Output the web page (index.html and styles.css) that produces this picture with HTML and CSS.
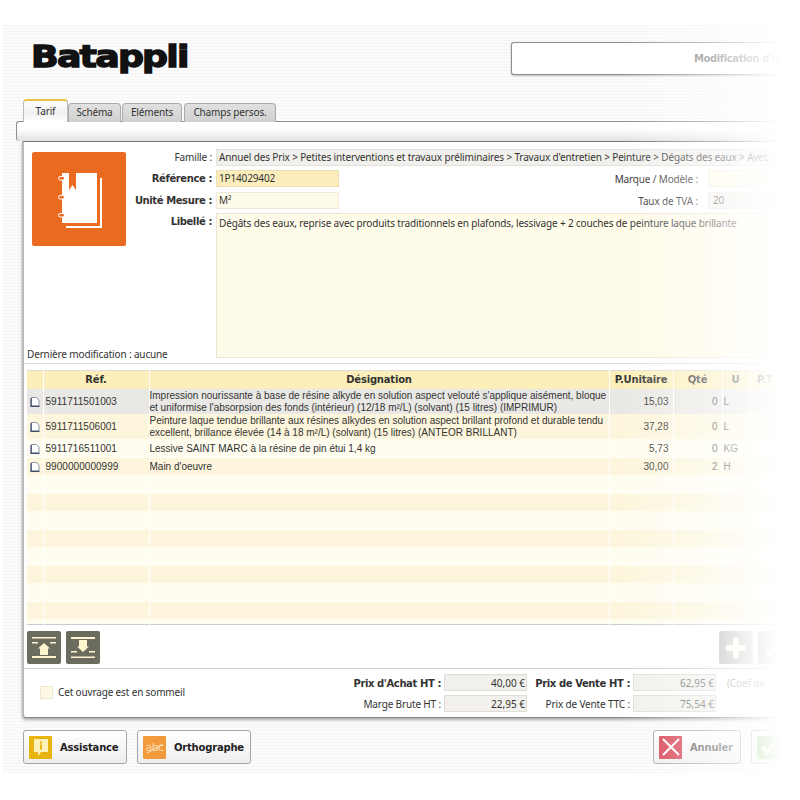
FILE: index.html
```html
<!DOCTYPE html>
<html lang="fr">
<head>
<meta charset="utf-8">
<title>Batappli</title>
<link rel="stylesheet" href="styles.css">
</head>
<body>
<div class="app">
  <header class="head">
    <div class="logo">Batappli</div>
    <div class="title"><span>Modification d'un</span></div>
  </header>
  <nav class="tabs">
    <div class="tab on">Tarif</div>
    <div class="tab t2">Schéma</div>
    <div class="tab t3">Eléments</div>
    <div class="tab t4">Champs persos.</div>
  </nav>
  <div class="tabbar"></div>
  <main class="panel">
    <section class="form">
      <div class="left">
        <div class="pic">
          <svg width="94" height="94" viewBox="0 0 94 94">
            <path d="M68 26h2v50H34v-2h34z" fill="#fff"/>
            <path d="M30 21h7v17l3.500-5 3.500 5V21h21v50H30z" fill="#fff"/>
            <g fill="#ea6b1f" stroke="#fff"><rect x="26.500" y="24.500" width="6" height="3.500" rx="1.700"/><rect x="26.500" y="43.500" width="6" height="3.500" rx="1.700"/><rect x="26.500" y="61.500" width="6" height="3.500" rx="1.700"/></g>
          </svg>
        </div>
        <div class="modif">Dernière modification : aucune</div>
      </div>
      <div class="fields">
        <div class="row r1"><label class="lab">Famille :</label><div class="inp fam">Annuel des Prix &gt; Petites interventions et travaux préliminaires &gt; Travaux d'entretien &gt; Peinture &gt; Dégats des eaux &gt; Avec</div></div>
        <div class="row r2"><label class="lab b">Référence :</label><div class="inp ref">1P14029402</div><label class="lab2">Marque / Modèle :</label><div class="inp side cream"></div></div>
        <div class="row r3"><label class="lab b">Unité Mesure :</label><div class="inp cream um">M²</div><label class="lab2">Taux de TVA :</label><div class="inp side grey">20</div></div>
        <div class="row r4"><label class="lab b">Libellé :</label><div class="inp cream area">Dégâts des eaux, reprise avec produits traditionnels en plafonds, lessivage + 2 couches de peinture laque brillante</div></div>
      </div>
    </section>
    <table class="grid">
      <colgroup><col class="c0"><col class="c1"><col class="c2"><col class="c3"><col class="c4"><col class="c5"><col class="c6"></colgroup>
      <thead><tr><th></th><th>Réf.</th><th>Désignation</th><th>P.Unitaire</th><th>Qté</th><th>U</th><th class="last">P.T</th></tr></thead>
      <tbody>
        <tr class="h25 sel"><td class="ic"><svg width="10" height="10" viewBox="0 0 10 10"><path d="M1.500.5h5L9 3v6H1.500z" fill="#fff" stroke="#8d97aa"/><path d="M1 1v8.300h8.500" fill="none" stroke="#3f4b66" stroke-width="1.200"/></svg></td><td class="rf">5911711501003</td><td class="de">Impression nourissante à base de résine alkyde en solution aspect velouté s'applique aisément, bloque<br>et uniformise l'absorpsion des fonds (intérieur) (12/18 m²/L) (solvant) (15 litres) (IMPRIMUR)</td><td class="n">15,03</td><td class="n">0</td><td class="u">L</td><td></td></tr>
        <tr class="h25 dk"><td class="ic"><svg width="10" height="10" viewBox="0 0 10 10"><path d="M1.500.5h5L9 3v6H1.500z" fill="#fff" stroke="#8d97aa"/><path d="M1 1v8.300h8.500" fill="none" stroke="#3f4b66" stroke-width="1.200"/></svg></td><td class="rf">5911711506001</td><td class="de">Peinture laque tendue brillante aux résines alkydes en solution aspect brillant profond et durable tendu<br>excellent, brillance élevée (14 à 18 m²/L) (solvant) (15 litres) (ANTEOR BRILLANT)</td><td class="n">37,28</td><td class="n">0</td><td class="u">L</td><td></td></tr>
        <tr class="h19"><td class="ic"><svg width="10" height="10" viewBox="0 0 10 10"><path d="M1.500.5h5L9 3v6H1.500z" fill="#fff" stroke="#8d97aa"/><path d="M1 1v8.300h8.500" fill="none" stroke="#3f4b66" stroke-width="1.200"/></svg></td><td class="rf">5911716511001</td><td class="de">Lessive SAINT MARC à la résine de pin étui 1,4 kg</td><td class="n">5,73</td><td class="n">0</td><td class="u">KG</td><td></td></tr>
        <tr class="h17 dk"><td class="ic"><svg width="10" height="10" viewBox="0 0 10 10"><path d="M1.500.5h5L9 3v6H1.500z" fill="#fff" stroke="#8d97aa"/><path d="M1 1v8.300h8.500" fill="none" stroke="#3f4b66" stroke-width="1.200"/></svg></td><td class="rf">9900000000999</td><td class="de">Main d'oeuvre</td><td class="n">30,00</td><td class="n">2</td><td class="u">H</td><td></td></tr>
        <tr class="h19"><td></td><td></td><td></td><td></td><td></td><td></td><td></td></tr>
        <tr class="h17 dk"><td></td><td></td><td></td><td></td><td></td><td></td><td></td></tr>
        <tr class="h19"><td></td><td></td><td></td><td></td><td></td><td></td><td></td></tr>
        <tr class="h17 dk"><td></td><td></td><td></td><td></td><td></td><td></td><td></td></tr>
        <tr class="h19"><td></td><td></td><td></td><td></td><td></td><td></td><td></td></tr>
        <tr class="h17 dk"><td></td><td></td><td></td><td></td><td></td><td></td><td></td></tr>
        <tr class="h19"><td></td><td></td><td></td><td></td><td></td><td></td><td></td></tr>
        <tr class="h17 dk"><td></td><td></td><td></td><td></td><td></td><td></td><td></td></tr>
        <tr class="h6"><td></td><td></td><td></td><td></td><td></td><td></td><td></td></tr>
      </tbody>
    </table>
    <section class="tools">
      <button class="sq"><svg width="24" height="21" viewBox="0 0 24 21"><g fill="#fff6d0"><path d="M0 0h24v1.500H0zM0 5h6v1.500H0zM18 5h6v1.500h-6zM0 19h24v2H0z"/><path d="M12 6l-6 5.500h2V18h8v-6.500h2z"/></g></svg></button>
      <button class="sq"><svg width="24" height="21" viewBox="0 0 24 21"><g fill="#fff6d0"><path d="M0 0h24v2H0zM0 14h6v1.500H0zM18 14h6v1.500h-6zM0 19.500h24V21H0z"/><path d="M12 15l6-5.500h-2V3H8v6.500H6z"/></g></svg></button>
      <span class="fill"></span>
      <button class="sq lite"><svg width="20" height="20" viewBox="0 0 20 20"><path d="M7 0h6v7h7v6h-7v7H7v-7H0V7h7z" fill="#fffbe8"/></svg></button>
      <button class="sq lite"><svg width="22" height="22" viewBox="0 0 22 22"><path d="M3 15L15 3l4 4L7 19l-5 1z" fill="#fff"/></svg></button>
    </section>
    <section class="totals">
      <label class="sleep"><span class="box"></span>Cet ouvrage est en sommeil</label>
      <div class="sums">
        <label class="sl b">Prix d'Achat HT :</label><div class="val">40,00 €</div><label class="sl b">Prix de Vente HT :</label><div class="val soft">62,95 €</div><span class="coef">(Coef de</span>
        <label class="sl">Marge Brute HT :</label><div class="val">22,95 €</div><label class="sl">Prix de Vente TTC :</label><div class="val soft">75,54 €</div>
      </div>
    </section>
  </main>
  <footer class="foot">
    <button class="btn bassist"><span class="bic yellow"><svg width="16" height="19" viewBox="0 0 16 19"><path d="M1 1h14v13H8l-3 4v-4H1z" fill="#fff2b8"/><path d="M7 3.500h2v2H7zM7 6.500h2v5H7z" fill="#e8b410"/></svg></span>Assistance</button>
    <button class="btn bortho"><span class="bic orange"><span class="abc">abc</span></span>Orthographe</button>
    <span class="fill"></span>
    <button class="btn bcancel"><span class="bic red"><svg width="18" height="18" viewBox="0 0 18 18"><path d="M1 1l16 16M17 1L1 17" stroke="#fff" stroke-width="2"/></svg></span>Annuler</button>
    <button class="btn bok"><span class="bic green"><svg width="18" height="18" viewBox="0 0 18 18"><path d="M2 9l5 6L16 3" stroke="#fff" stroke-width="3" fill="none"/></svg></span></button>
  </footer>
</div>
<div class="fade"></div>
</body>
</html>
```
FILE: styles.css
```css
* { box-sizing: border-box; }
html, body { margin: 0; padding: 0; background: #fff; }
body { width: 800px; height: 800px; overflow: hidden; position: relative; font: 10px "Noto Sans", sans-serif; letter-spacing: -.15px; color: #333; }
.app { position: absolute; left: 3px; top: 25px; width: 797px; height: 748px; overflow: hidden; background: repeating-linear-gradient(#f5f5f5 0 1px, #fbfbfb 1px 3px); }
.head { height: 75px; display: flex; align-items: flex-start; }
.logo { flex: none; margin: 13px 0 0 28px; width: 160px; font: bold 31px/36px "DejaVu Sans", sans-serif; color: #111; letter-spacing: -1.5px; -webkit-text-stroke: 1.4px #111; transform: scaleX(1.17); transform-origin: left center; }
.title { flex: 1; margin: 17px 0 0 320px; height: 33px; background: #fff; border: 1px solid #8e8e8e; border-right: 0; border-radius: 3px 0 0 3px; box-shadow: 0 1px 2px #bbb; display: flex; align-items: center; padding-left: 182px; white-space: nowrap; font: bold 10px "DejaVu Sans", sans-serif; letter-spacing: -.4px; color: #777; }
.tabs { height: 22px; padding-left: 20px; display: flex; align-items: flex-end; position: relative; z-index: 1; margin-bottom: -1px; }
.tab { height: 19px; line-height: 17px; text-align: center; background: linear-gradient(#e0e0e0, #d0d0d0); border: 1px solid #aaa; border-bottom: 0; border-radius: 4px 4px 0 0; margin-right: 1px; width: 53px; }
.tab.on { height: 23px; width: 45px; line-height: 20px; background: linear-gradient(#fff, #f0f0f0 60%, #fff); border-top: 2px solid #e8c040; border-left-color: #bbb; border-right-color: #bbb; margin-right: 0; }
.t3 { width: 60px; } .t4 { width: 92px; margin-left: 1px; }
.tabbar { height: 20px; margin-left: 13px; background: linear-gradient(#fff 35%, #e2e2e2); border: 1px solid #8f8f8f; border-right: 0; border-bottom: 0; border-radius: 3px 0 0 3px; }
.panel { margin-left: 19px; height: 577px; background: #fff; border-left: 2px solid #b9b9b9; border-top: 1px solid #777; border-bottom: 1px solid #888; border-radius: 0 0 0 4px; box-shadow: 0 2px 3px #aaa; padding: 0 0 0 3px; }
.form { height: 222px; display: flex; border-bottom: 1px solid #ddd; margin-left: -3px; padding-left: 5px; }
.left { width: 183px; padding-top: 10px; flex: none; }
.pic { width: 94px; height: 94px; margin-left: 3px; background: #ea6b1f; border-radius: 2px; }
.pic svg { display: block; }
.modif { margin-top: 102px; margin-left: -2px; line-height: 12px; }
.fields { padding-top: 7px; flex: 1; }
.row { display: flex; align-items: flex-start; }
.r1 { height: 21px; } .r2 { height: 22px; } .r3 { height: 21px; } .r4 { height: 145px; }
.lab { width: 0; flex: none; white-space: nowrap; display: flex; justify-content: flex-end; line-height: 16px; margin-right: 4px; }
.b { font-family: "DejaVu Sans", sans-serif; font-weight: bold; letter-spacing: -.4px; }
.lab.b { line-height: 18px; }
.inp { height: 17px; line-height: 15px; padding-left: 2px; border: 1px solid #eeeadd; white-space: nowrap; overflow: hidden; background: #fff; }
.fam { width: 581px; background: #f1f0ec; border-color: #e2e0da; }
.ref { width: 123px; background: #fbeebc; border-color: #ece0b0; }
.cream { background: #fffbe9; }
.um { width: 123px; }
.side { width: 89px; }
.grey { background: #f3f2ee; color: #555; padding-left: 4px; }
.lab2 { width: 369px; flex: none; text-align: right; padding-right: 10px; line-height: 18px; }
.area { width: 581px; height: 145px; padding-top: 2px; white-space: normal; border-color: #eae6d2; }
.grid { border-collapse: collapse; table-layout: fixed; width: 770px; margin: 6px 0 0 0; border-bottom: 1px solid #ccc; border-top: 1px solid #ddd; font-family: "Liberation Sans", sans-serif; letter-spacing: 0; }
.c0 { width: 16px; } .c1 { width: 106px; } .c2 { width: 460px; } .c3 { width: 64px; } .c4 { width: 49px; } .c5 { width: 27px; }
th { height: 18px; padding: 0; background: #fcefb9; border-right: 1px solid #fff; font: bold 10px "DejaVu Sans", sans-serif; letter-spacing: -.2px; color: #333; text-align: center; }
.last { padding-right: 16px; }
td { padding: 1px 0 0; border-right: 1px solid #fff; background: #fffdf0; color: #333; vertical-align: middle; font-size: 10px; line-height: 12px; }
.dk td { background: #fdf6dc; }
.h25 td { height: 25px; }
.h19 td { height: 19px; }
.h17 td { height: 17px; }
.h6 td { height: 6px; padding: 0; }
.sel td { background: #e9e8e4; }
.ic svg { display: block; margin-left: 3px; }
.rf { padding-left: 2px; letter-spacing: .05px; }
.de { white-space: nowrap; }
td.n { text-align: right; padding-right: 4px; }
td.u { padding-left: 1px; }
.tools { height: 44px; display: flex; padding: 6px 0 5px 3px; gap: 5px; border-bottom: 1px solid #ccc; margin-left: -3px; }
.sq { flex: none; width: 34px; height: 33px; padding: 0; border: 0; background: #6b6b5e; border-radius: 2px; display: flex; align-items: center; justify-content: center; }
.lite { background: linear-gradient(90deg, #b4b4b4, #d0d0d0); }
.tools .fill { flex: none; width: 609px; }
.totals { display: flex; height: 46px; }
.sleep { flex: none; display: flex; align-items: center; width: 310px; padding: 0 0 0 13px; gap: 5px; height: 46px; }
.box { width: 13px; height: 13px; background: #fdf9e6; border: 1px solid #eee8d0; }
.sums { display: grid; grid-template-columns: 107px 83px 106px 83px auto; grid-template-rows: 17px 17px; row-gap: 4px; padding-top: 5px; align-items: center; }
.sl { text-align: right; padding: 1px 3px 0 0; white-space: nowrap; }
.val { height: 17px; line-height: 16px; background: #f1f0ec; border: 1px solid #dfddd6; text-align: right; padding-right: 1px; color: #333; letter-spacing: 0; }
.soft { color: #666; }
.coef { padding-left: 11px; color: #888; white-space: nowrap; }
.foot { display: flex; padding: 12px 0 0 20px; }
.btn { flex: none; height: 34px; padding: 0 0 0 5px; display: flex; align-items: center; gap: 8px; background: linear-gradient(#fff, #eee); border: 1px solid #a5a5a5; border-radius: 3px; font: bold 10px "DejaVu Sans", sans-serif; letter-spacing: -.2px; color: #222; }
.bassist { width: 104px; margin-right: 10px; }
.bortho { width: 114px; }
.foot .fill { flex: none; width: 402px; }
.bcancel { width: 88px; margin-right: 10px; color: #555; }
.bok { width: 40px; border-right: 0; border-radius: 3px 0 0 3px; }
.bic { flex: none; width: 23px; height: 23px; border-radius: 1px; display: flex; align-items: center; justify-content: center; }
.yellow { background: #e8b410; }
.orange { background: #f39a3c; }
.red { background: #d4394a; }
.green { background: #7fc050; }
.abc { position: relative; font: 11px "DejaVu Sans", sans-serif; letter-spacing: -.6px; color: #fbdcb0; }
.abc::after { content: ""; position: absolute; left: 0; right: 0; top: 7px; height: 1px; background: #fbdcb0; transform: rotate(-30deg); }
.fade { position: absolute; inset: 0; pointer-events: none; background: linear-gradient(90deg, rgba(255,255,255,0) 620px, rgba(255,255,255,.5) 715px, #fff 780px); }
```
